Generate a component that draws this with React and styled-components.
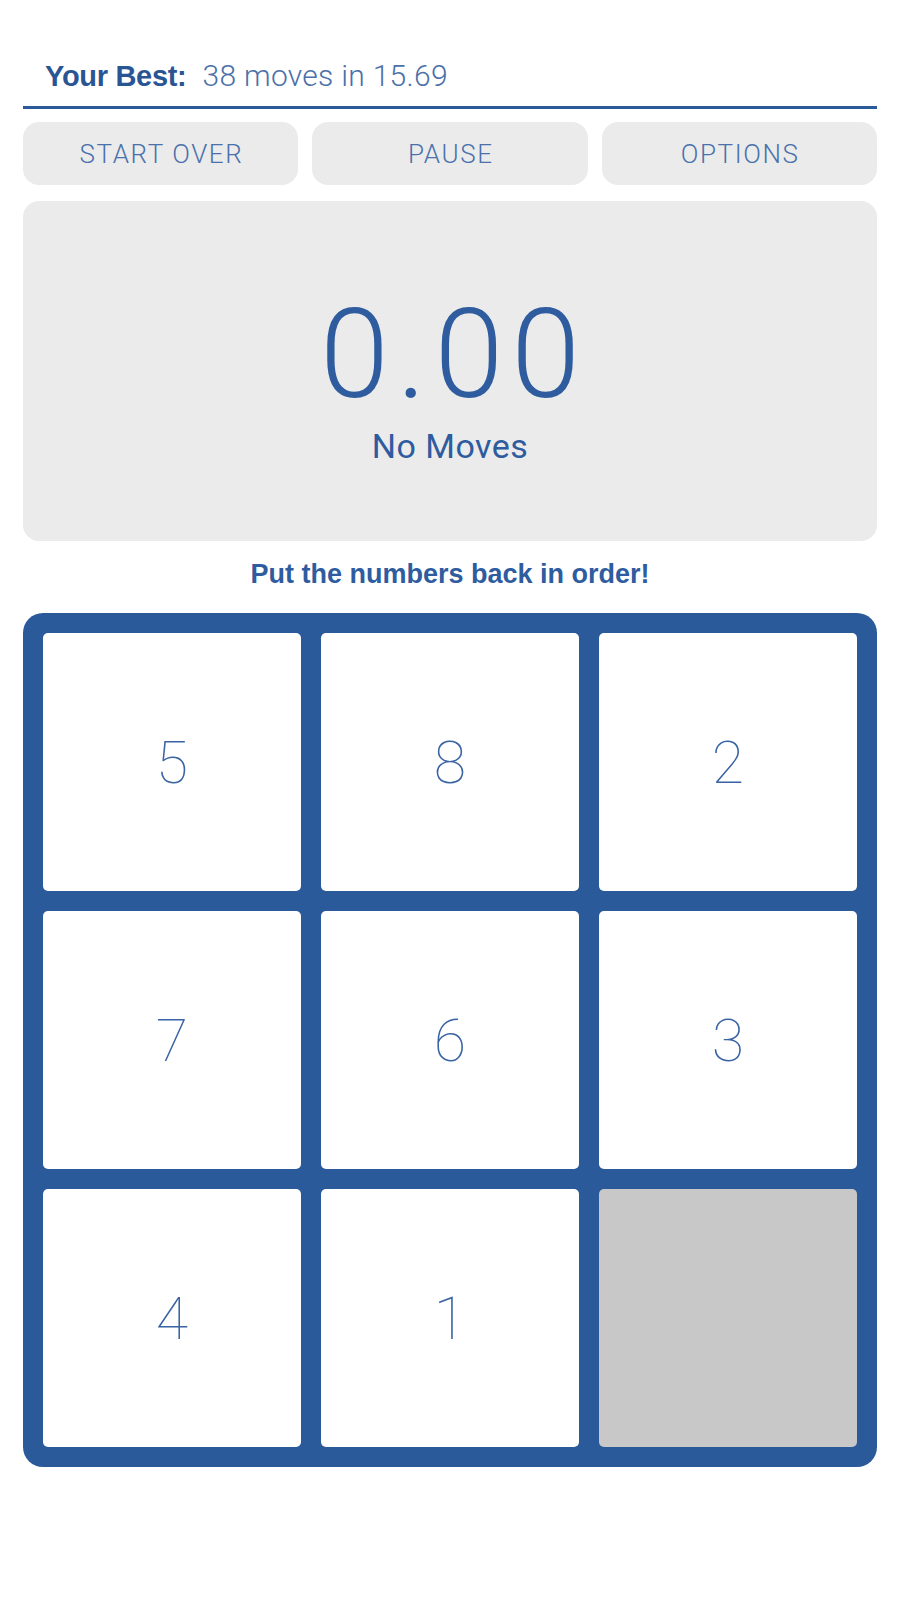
import React from "react";
import styled, { createGlobalStyle } from "styled-components";

const BLUE = "#2B5A9B";
const TEXT = "#2E5C9F";

const GlobalStyle = createGlobalStyle`
  html, body {
    margin: 0;
    padding: 0;
    background: #ffffff;
  }
  body {
    font-family: Roboto, "Liberation Sans", Arial, sans-serif;
    -webkit-font-smoothing: antialiased;
  }
  * { box-sizing: border-box; }
`;

const Page = styled.div`
  width: 900px;
  min-height: 1598px;
  padding: 59px 23px 0 23px;
  background: #ffffff;
`;

const Header = styled.div`
  display: flex;
  align-items: baseline;
  padding: 0 0 13px 22px;
  border-bottom: 3px solid ${BLUE};
  line-height: 34px;
`;

const BestLabel = styled.span`
  font-family: "Liberation Sans", Arial, sans-serif;
  font-weight: 700;
  font-size: 29px;
  color: #2A5594;
  letter-spacing: -0.3px;
`;

const BestValue = styled.span`
  font-family: Roboto, "Liberation Sans", sans-serif;
  font-weight: 300;
  font-size: 30px;
  color: #4C70A8;
  margin-left: 16px;
  letter-spacing: 0.3px;
`;

const ButtonRow = styled.div`
  display: grid;
  grid-template-columns: repeat(3, 1fr);
  gap: 14px;
  margin-top: 13px;
`;

const Button = styled.button`
  height: 63px;
  border: none;
  border-radius: 16px;
  background: #EBEBEB;
  color: #4A71AB;
  font-family: Roboto, "Liberation Sans", sans-serif;
  font-weight: 300;
  font-size: 26px;
  letter-spacing: 1.6px;
  text-indent: 1.6px;
  text-transform: uppercase;
  padding: 0;
  cursor: pointer;
`;

const Panel = styled.div`
  margin-top: 16px;
  height: 340px;
  border-radius: 16px;
  background: #EBEBEB;
  display: flex;
  flex-direction: column;
  align-items: center;
  padding-top: 83px;
`;

const Timer = styled.div`
  font-family: Roboto, "Liberation Sans", sans-serif;
  font-weight: 300;
  font-size: 124px;
  line-height: 142px;
  color: ${TEXT};
  letter-spacing: 8px;
  padding-left: 8px;
`;

const Moves = styled.div`
  font-family: Roboto, "Liberation Sans", sans-serif;
  font-weight: 400;
  font-size: 34px;
  line-height: 40px;
  color: ${TEXT};
  letter-spacing: 0.5px;
`;

const Message = styled.div`
  margin-top: 17px;
  text-align: center;
  font-family: "Liberation Sans", Arial, sans-serif;
  font-weight: 700;
  font-size: 27px;
  line-height: 32px;
  color: #2E5C9F;
`;

const Board = styled.div`
  margin-top: 23px;
  background: ${BLUE};
  border-radius: 20px;
  padding: 20px;
  display: grid;
  grid-template-columns: repeat(3, 1fr);
  grid-auto-rows: 258px;
  gap: 20px;
`;

const Tile = styled.div`
  border-radius: 5px;
  background: ${(p) => (p.$empty ? "#C8C8C8" : "#FFFFFF")};
  display: flex;
  align-items: center;
  justify-content: center;
  font-family: Roboto, "Liberation Sans", sans-serif;
  font-weight: 100;
  font-size: 59px;
  color: #3A64A4;
`;

const tiles = [5, 8, 2, 7, 6, 3, 4, 1, null];

export default function App() {
  return (
    <>
      <GlobalStyle />
      <Page>
        <Header>
          <BestLabel>Your Best:</BestLabel>
          <BestValue>38 moves in 15.69</BestValue>
        </Header>
        <ButtonRow>
          <Button>Start Over</Button>
          <Button>Pause</Button>
          <Button>Options</Button>
        </ButtonRow>
        <Panel>
          <Timer>0.00</Timer>
          <Moves>No Moves</Moves>
        </Panel>
        <Message>Put the numbers back in order!</Message>
        <Board>
          {tiles.map((n, i) => (
            <Tile key={i} $empty={n === null}>
              {n}
            </Tile>
          ))}
        </Board>
      </Page>
    </>
  );
}
